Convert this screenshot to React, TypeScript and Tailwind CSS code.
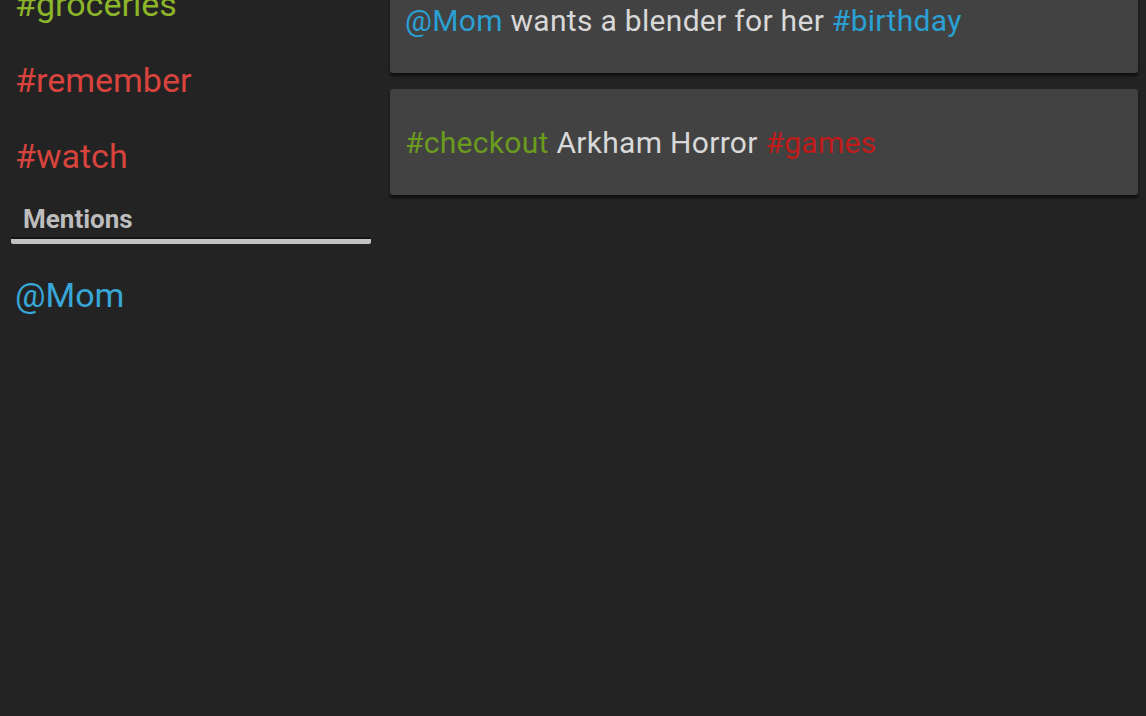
import React from "react";

export default function App() {
  return (
    <div
      className="w-[1146px] h-[716px] overflow-hidden bg-[#232323]"
      style={{ fontFamily: "Roboto, 'Noto Sans', sans-serif" }}
    >
      <div className="flex -mt-[34px]">
        <div className="w-[380px] shrink-0 flex flex-col">
          <div className="h-[76px] flex items-center pl-[15px] text-[34px] text-[#8db52a]">#groceries</div>
          <div className="h-[76px] flex items-center pl-[15px] text-[34px] text-[#d8433e]">#remember</div>
          <div className="h-[76px] flex items-center pl-[15px] text-[34px] text-[#d8433e]">#watch</div>
          <div className="pl-[23px] pt-[10px] text-[26px] leading-[30px] font-bold text-[#bdbdbd]">Mentions</div>
          <div className="ml-[11px] w-[360px] mt-[3px] h-[7px] bg-[#c2c2c2] border-t-[2px] border-[#141414] rounded-[2px]" />
          <div className="h-[76px] mt-[13px] flex items-center pl-[15px] text-[34px] text-[#38a6d6]">@Mom</div>
        </div>
        <div className="flex-1 flex flex-col gap-[16px] pl-[10px] pr-[8px] pt-[1px]">
          <div className="h-[106px] rounded-[3px] bg-[#424242] shadow-[0_3px_3px_rgba(0,0,0,0.6)] flex items-center pl-[15px] text-[30px] tracking-[0.3px] text-[#d8d8d8]">
            <span className="text-[#2aa0d4]">@Mom</span>
            <span className="whitespace-pre"> wants a blender for her </span>
            <span className="text-[#2aa0d4]">#birthday</span>
          </div>
          <div className="h-[106px] rounded-[3px] bg-[#424242] shadow-[0_3px_3px_rgba(0,0,0,0.6)] flex items-center pl-[15px] text-[30px] tracking-[0.3px] text-[#d8d8d8]">
            <span className="text-[#6b9b1d]">#checkout</span>
            <span className="whitespace-pre"> Arkham Horror </span>
            <span className="text-[#c01b1b]">#games</span>
          </div>
        </div>
      </div>
    </div>
  );
}
